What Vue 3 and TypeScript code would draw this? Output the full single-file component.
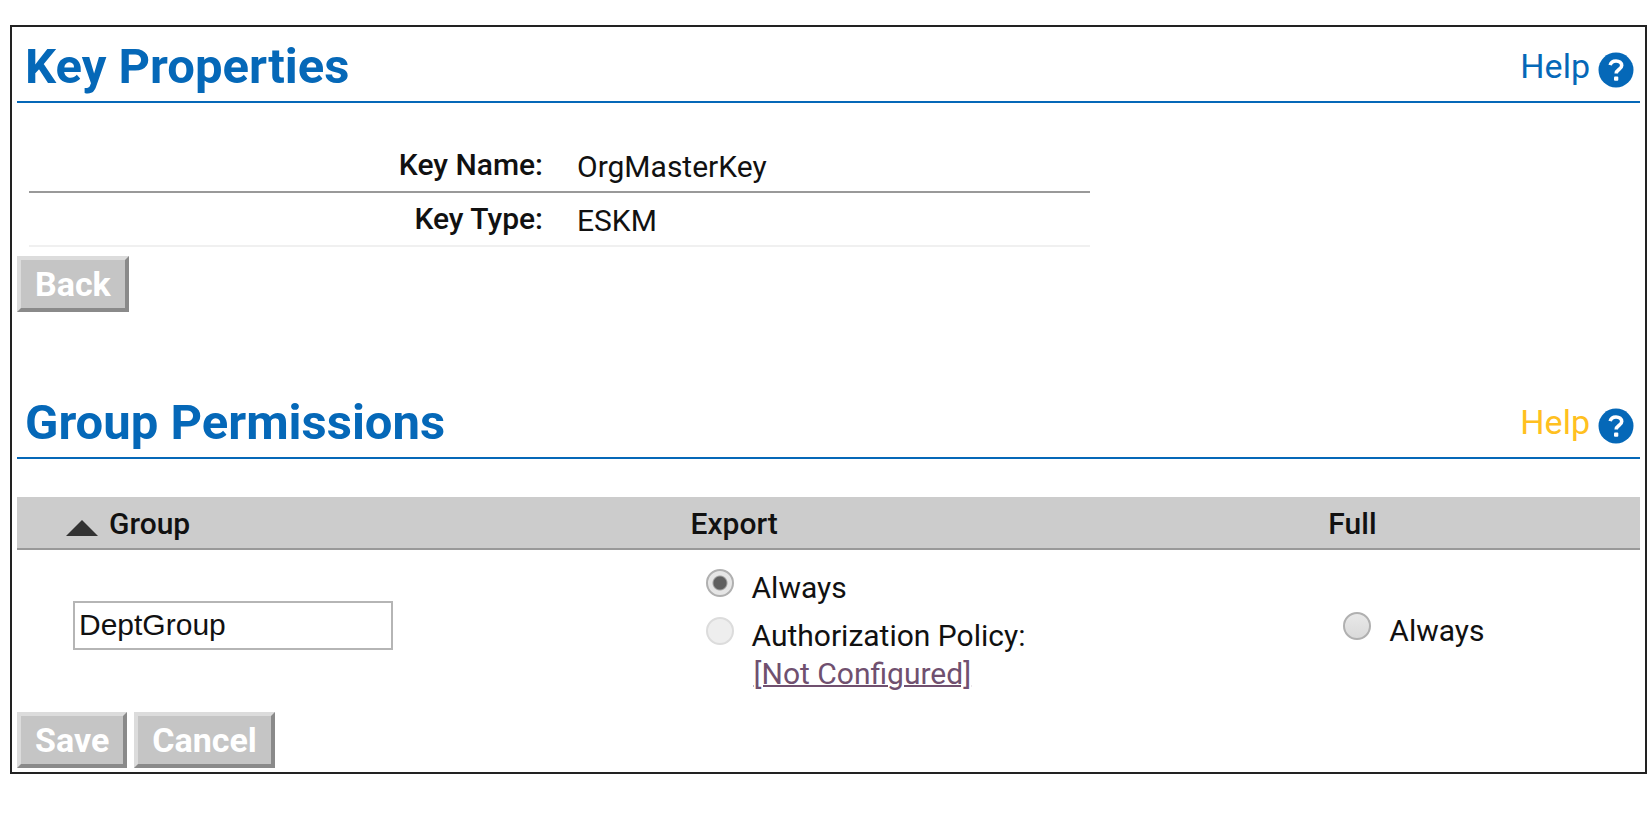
<script setup lang="ts">
import { ref } from 'vue'

interface KeyProperty {
  label: string
  value: string
}

const properties: KeyProperty[] = [
  { label: 'Key Name:', value: 'OrgMasterKey' },
  { label: 'Key Type:', value: 'ESKM' },
]

const group = ref('DeptGroup')
const permission = ref('export-always')
</script>

<template>
  <main class="frame">
    <section>
      <header class="section-head">
        <h1>Key Properties</h1>
        <a class="help" href="#key-help">
          <span>Help</span>
          <svg class="help-icon" viewBox="0 0 36 36" aria-hidden="true">
            <circle cx="18" cy="18" r="17.5" fill="#0568b8" />
            <path d="M12.2 13.2C12.8 10.4 15 9 18 9c3.300 0 5.700 1.700 5.700 4.500 0 4.100-5.500 4-5.500 8" fill="none" stroke="#fff" stroke-width="3.600" />
            <rect x="16" y="24.500" width="4.300" height="4.300" rx="1" fill="#fff" />
          </svg>
        </a>
      </header>
      <table class="properties">
        <tbody>
          <tr v-for="p in properties" :key="p.label">
            <th scope="row">{{ p.label }}</th>
            <td>{{ p.value }}</td>
          </tr>
        </tbody>
      </table>
      <div class="actions">
        <button type="button">Back</button>
      </div>
    </section>

    <section class="permissions">
      <header class="section-head">
        <h1>Group Permissions</h1>
        <a class="help active" href="#group-help">
          <span>Help</span>
          <svg class="help-icon" viewBox="0 0 36 36" aria-hidden="true">
            <circle cx="18" cy="18" r="17.5" fill="#0568b8" />
            <path d="M12.2 13.2C12.8 10.4 15 9 18 9c3.300 0 5.700 1.700 5.700 4.500 0 4.100-5.500 4-5.500 8" fill="none" stroke="#fff" stroke-width="3.600" />
            <rect x="16" y="24.500" width="4.300" height="4.300" rx="1" fill="#fff" />
          </svg>
        </a>
      </header>
      <table class="grid">
        <colgroup>
          <col class="col-group" />
          <col class="col-export" />
          <col class="col-full" />
        </colgroup>
        <thead>
          <tr>
            <th scope="col" class="group-cell">
              <svg class="sort" viewBox="0 0 32 16" aria-hidden="true"><path d="M16 0L32 16H0z" fill="#333" /></svg>
              <label for="group">Group</label>
            </th>
            <th scope="col">Export</th>
            <th scope="col">Full</th>
          </tr>
        </thead>
        <tbody>
          <tr>
            <td class="group-cell">
              <input id="group" v-model="group" class="group-input" type="text" />
            </td>
            <td>
              <div class="options">
                <div class="option">
                  <input id="export-always" v-model="permission" type="radio" name="permission" value="export-always" />
                  <label for="export-always">Always</label>
                </div>
                <div class="option">
                  <input id="export-policy" v-model="permission" type="radio" name="permission" value="export-policy" disabled />
                  <div class="policy">
                    <label for="export-policy">Authorization Policy:</label>
                    <a href="#policy">[Not Configured]</a>
                  </div>
                </div>
              </div>
            </td>
            <td>
              <div class="option">
                <input id="full-always" v-model="permission" type="radio" name="permission" value="full-always" />
                <label for="full-always">Always</label>
              </div>
            </td>
          </tr>
        </tbody>
      </table>
      <div class="actions">
        <button type="button">Save</button>
        <button type="button">Cancel</button>
      </div>
    </section>
  </main>
</template>

<style>
body {
  margin: 0;
  background: #fff;
}
</style>

<style scoped>
* {
  box-sizing: border-box;
}
.frame {
  margin: 25px 3px 24px 10px;
  padding: 0 5px 4px;
  border: 2px solid #222;
  font-family: Roboto, "Liberation Sans", sans-serif;
  font-size: 30px;
  line-height: 38px;
  color: #111;
}
.section-head {
  display: flex;
  justify-content: space-between;
  align-items: center;
  height: 76px;
  padding: 0 6px 0 8px;
  border-bottom: 2px solid #0568b8;
}
h1 {
  margin: 0;
  padding-top: 6px;
  font-size: 49px;
  line-height: 56px;
  font-weight: 700;
  color: #0568b8;
}
.help {
  display: flex;
  align-items: center;
  gap: 8px;
  padding-top: 4px;
  font-size: 34px;
  line-height: 40px;
  color: #0568b8;
  text-decoration: none;
}
.help.active {
  color: #ffc020;
}
.help-icon {
  width: 36px;
  height: 36px;
  margin-top: 8px;
}
table {
  border-collapse: separate;
  border-spacing: 0;
  table-layout: fixed;
}
th {
  font-weight: 500;
  text-align: left;
}
th,
td {
  padding: 0;
}
.properties {
  width: calc(66% - 10px);
  margin: 36px 0 9px 12px;
}
.properties th,
.properties td {
  height: 54px;
  border-bottom: 2px solid #999;
}
.properties tr:last-child > * {
  border-bottom-color: #f0f0f0;
}
.properties th {
  width: 514px;
  text-align: right;
}
.properties td {
  padding: 4px 0 0 34px;
}
.actions {
  display: flex;
  gap: 7px;
}
button {
  height: 56px;
  padding: 0 14px;
  border: 4px solid;
  border-color: #dcdcdc #8a8a8a #8a8a8a #dcdcdc;
  background: #c5c5c5;
  color: #fff;
  font-family: inherit;
  font-size: 34px;
  line-height: 40px;
  font-weight: 700;
}
.permissions {
  margin-top: 71px;
}
.grid {
  width: 100%;
  margin-top: 38px;
}
.col-group {
  width: 41.500%;
}
.col-export {
  width: 39.300%;
}
.grid thead th {
  height: 53px;
  padding-top: 2px;
  background: #ccc;
  border-bottom: 2px solid #999;
}
.grid .group-cell {
  padding-left: 49px;
}
.grid td.group-cell {
  padding: 0 0 12px 56px;
}
.sort {
  width: 32px;
  height: 16px;
  margin: 0 11px -2px 0;
}
.grid tbody td {
  height: 162px;
}
.group-input {
  display: block;
  width: 320px;
  height: 49px;
  padding: 0 4px;
  border: 2px solid #b5b5b5;
  background: #fff;
  color: #111;
  font-family: "Liberation Sans", Arial, sans-serif;
  font-size: 30px;
}
.options {
  display: grid;
  gap: 10px;
}
.option {
  display: flex;
  align-items: flex-start;
  gap: 18px;
  padding-left: 15px;
}
.option input {
  flex: none;
  appearance: none;
  width: 28px;
  height: 28px;
  margin: 0;
  border: 2px solid #b0b0b0;
  border-radius: 50%;
  background: linear-gradient(#e8e8e8, #dadada);
}
.option input:checked {
  background: radial-gradient(circle, #606060 6px, #e6e6e6 8px);
}
.option input:disabled {
  border-color: #dcdcdc;
  background: #eee;
}
.policy {
  display: grid;
}
.policy a {
  padding-left: 2px;
  color: #70506f;
  text-decoration-thickness: 2px;
}
</style>
